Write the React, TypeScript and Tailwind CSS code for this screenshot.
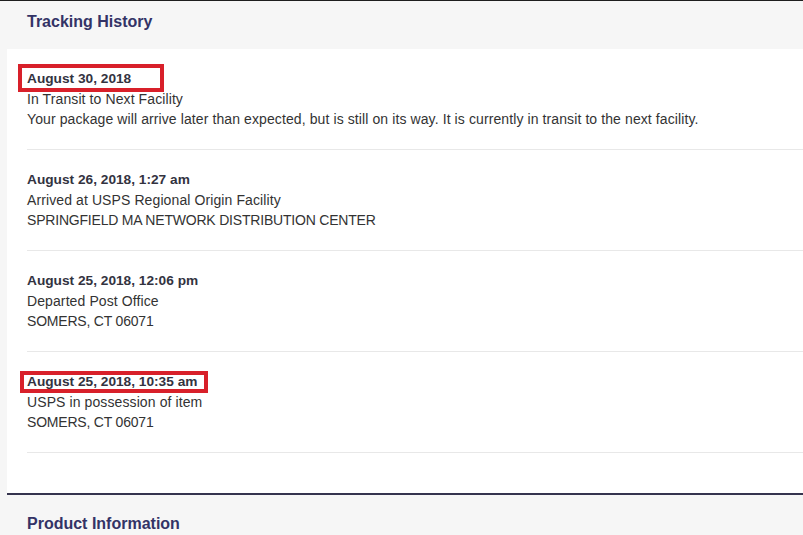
import React from "react";

type Entry = {
  date: string;
  lines: string[];
  box?: { left: number; top: number; width: number; height: number };
};

const entries: Entry[] = [
  {
    date: "August 30, 2018",
    lines: [
      "In Transit to Next Facility",
      "Your package will arrive later than expected, but is still on its way. It is currently in transit to the next facility.",
    ],
    box: { left: -9, top: -5, width: 146, height: 28 },
  },
  {
    date: "August 26, 2018, 1:27 am",
    lines: ["Arrived at USPS Regional Origin Facility", "SPRINGFIELD MA NETWORK DISTRIBUTION CENTER"],
  },
  {
    date: "August 25, 2018, 12:06 pm",
    lines: ["Departed Post Office", "SOMERS, CT 06071"],
  },
  {
    date: "August 25, 2018, 10:35 am",
    lines: ["USPS in possession of item", "SOMERS, CT 06071"],
    box: { left: -7, top: -1, width: 188, height: 22 },
  },
];

export default function App() {
  return (
    <div className="w-[803px] h-[535px] overflow-hidden bg-[#f6f6f6] border-t border-[#1e1e1e] font-['Liberation_Sans',Arial,sans-serif]">
      <div className="h-[48px] pl-[27px] pt-[11px]">
        <h2 className="text-[16px] leading-[20px] font-bold text-[#333366]">Tracking History</h2>
      </div>
      <div className="ml-[7px] bg-white pl-[20px] pb-[40px] border-b-2 border-[#35344e]">
        {entries.map((e, i) => (
          <div key={i} className="py-[20px] border-b border-[#e8e8e8]">
            <div className="relative h-[20px] text-[13.7px] leading-[20px] font-bold text-[#33333f]">
              {e.date}
              {e.box && (
                <span
                  className="absolute border-[4px] border-[#d8202a] pointer-events-none"
                  style={{ left: e.box.left, top: e.box.top, width: e.box.width, height: e.box.height }}
                />
              )}
            </div>
            {e.lines.map((l, j) =>
              l === l.toUpperCase() ? (
                <div key={j} className="h-[20px] text-[14px] leading-[20px] text-[#333] tracking-[-0.2px]">
                  {l}
                </div>
              ) : (
                <div key={j} className="h-[20px] text-[14px] leading-[20px] text-[#333] tracking-[0.1px]">
                  {l}
                </div>
              )
            )}
          </div>
        ))}
      </div>
      <div className="pl-[27px] pt-[19px]">
        <h2 className="text-[16px] leading-[20px] font-bold text-[#333366]">Product Information</h2>
      </div>
    </div>
  );
}
